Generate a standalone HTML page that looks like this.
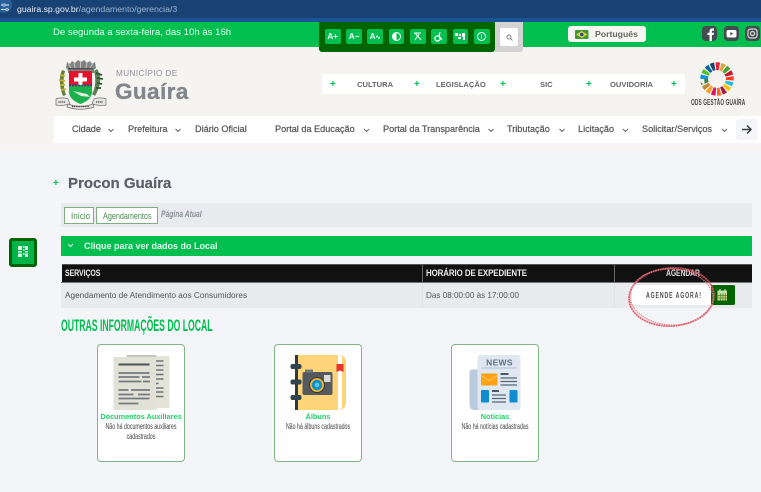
<!DOCTYPE html>
<html lang="pt"><head><meta charset="utf-8"><title>Procon Guaíra</title>
<style>
html,body{margin:0;padding:0}
body{width:761px;height:492px;position:relative;overflow:hidden;background:#f3f5f9;font-family:"Liberation Sans",sans-serif;color:#555}
.a{position:absolute}
.t{position:absolute;white-space:nowrap}
.sq{position:absolute;background:#00bf4f;border-radius:2px;width:15.5px;height:15px;top:29px;color:#fff;font:bold 8.2px/15px "Liberation Sans",sans-serif;text-align:center}
.nav{position:absolute;white-space:nowrap;top:123px;font-size:9.15px;line-height:12px;color:#555;-webkit-text-stroke:.2px #555}
.top{position:absolute;white-space:nowrap;top:79.5px;font-size:7.6px;line-height:10px;color:#666;font-weight:bold}
.plus{position:absolute;color:#00bf4f;font:bold 10px/10px "Liberation Sans",sans-serif;top:80px}
.card{position:absolute;top:343.5px;width:86px;height:116.5px;background:#fff;border:1.5px solid #80b584;border-radius:4px}
.ct{position:absolute;left:-10px;right:-10px;text-align:center;top:67px;color:#1fcf68;font-size:7.35px;line-height:10px;font-weight:bold;white-space:nowrap}
.cs{position:absolute;left:-20px;right:-20px;text-align:center;top:77px;color:#444;font-size:8px;line-height:10.2px;transform:scaleX(.66)}
svg{position:absolute;overflow:visible}
</style></head><body>

<!-- browser bar -->
<div class="a" style="left:0;top:0;width:761px;height:18px;background:#184274"></div>
<div class="a" style="left:0;top:18px;width:761px;height:4px;background:#1b5495"></div>
<div class="a" style="left:-4px;top:-3px;width:16px;height:16px;border-radius:50%;background:#2a5f9e"></div>
<svg style="left:1px;top:3px" width="9" height="9" viewBox="0 0 9 9"><path d="M0 2h8M0 6.5h8" stroke="#dfe8f3" stroke-width="1"/><circle cx="3" cy="2" r="1.2" fill="#2a5f9e" stroke="#dfe8f3" stroke-width=".7"/><circle cx="6" cy="6.5" r="1.2" fill="#2a5f9e" stroke="#dfe8f3" stroke-width=".7"/></svg>
<div class="t" style="left:17px;top:2.5px;font-size:8.7px;line-height:12px;color:#e6edf5">guaira.sp.gov.br<span style="color:#9db5d1">/agendamento/gerencia/3</span></div>

<!-- green bar -->
<div class="a" style="left:0;top:22px;width:761px;height:24.5px;background:#00bf4f"></div>
<div class="t" style="left:53px;top:26px;font-size:9.6px;line-height:13px;color:#eafff2">De segunda a sexta-feira, das 10h às 16h</div>

<!-- beige header -->
<div class="a" style="left:0;top:46.5px;width:761px;height:103px;background:#f5f4f0"></div>

<!-- accessibility -->
<div class="a" style="left:319px;top:22px;width:176px;height:29.5px;background:#006400;border-radius:0 0 3px 3px"></div>
<div class="sq" style="left:325px">A+</div>
<div class="sq" style="left:346.3px">A−</div>
<div class="sq" style="left:367.3px">A<span style="font-size:6px">∿</span></div>
<div class="sq" style="left:388.7px"><svg style="left:3px;top:3px" width="9" height="9"><circle cx="4.5" cy="4.5" r="4" fill="#00bf4f" stroke="#fff"/><path d="M4.5.5a4 4 0 0 0 0 8z" fill="#fff"/></svg></div>
<div class="sq" style="left:410px"><svg style="left:3px;top:3px" width="9" height="9" fill="none" stroke="#fff"><path d="M1 1h7M2 1l6 7M6 2L2 8"/></svg></div>
<div class="sq" style="left:431.3px"><svg style="left:3px;top:2px" width="9" height="11" fill="none" stroke="#fff" stroke-width="1.3"><circle cx="3.5" cy="7.5" r="2.5"/><path d="M6 1L5 5l3 4"/></svg></div>
<div class="sq" style="left:452.7px"><svg style="left:2px;top:3px" width="11" height="9" fill="#fff"><path d="M0 1h3v3H0zM4 2h2v2H4zM7 1h3v7H8V5H7zM3 5h3v2H3z"/></svg></div>
<div class="sq" style="left:474px"><svg style="left:3px;top:3px" width="9" height="9" fill="none" stroke="#fff"><circle cx="4.5" cy="4.5" r="4"/><path d="M4.5 2.5v4"/></svg></div>
<div class="a" style="left:495px;top:22px;width:28px;height:30px;background:#d3d3d3;border-radius:0 0 3px 0"></div>
<div class="a" style="left:500px;top:28px;width:18px;height:18px;background:#fff;border-radius:2px"></div>
<svg style="left:506px;top:34px" width="7" height="7" fill="none" stroke="#888"><circle cx="3" cy="3" r="2"/><path d="M4.5 4.5L6.5 6.5"/></svg>

<!-- language -->
<div class="a" style="left:568px;top:26px;width:77.5px;height:16px;background:#f7f7f2;border-radius:3px"></div>
<svg style="left:575px;top:30px" width="13.500" height="9"><rect width="13.500" height="9" rx="1" fill="#3f9a35"/><path d="M6.750 1l5.500 3.500-5.500 3.500-5.500-3.500z" fill="#e6d13a"/><circle cx="6.750" cy="4.500" r="1.800" fill="#2a4b93"/></svg>
<div class="t" style="left:595px;top:28px;font-size:8.7px;line-height:12px;font-weight:bold;color:#666">Português</div>

<!-- social -->
<div class="a" style="left:702px;top:26px;width:15px;height:15px;background:#444b50;border-radius:4px"></div>
<svg style="left:702px;top:26px" width="15" height="15"><path d="M7.500 15V9H5.500V6.800h2V5.300C7.500 3.600 8.500 2.400 10.200 2.400h1.800v2.300h-1.200c-.6 0-.9.300-.9.900v1.200h2.100L11.700 9H9.900v6z" fill="#fff"/></svg>
<div class="a" style="left:724px;top:26px;width:15px;height:15px;background:#444b50;border-radius:4px"></div>
<svg style="left:724px;top:26px" width="15" height="15"><rect x="2.500" y="4" width="10" height="7.500" rx="2" fill="#fff"/><path d="M6.300 6l3 1.700-3 1.700z" fill="#444b50"/></svg>
<div class="a" style="left:745px;top:26px;width:15px;height:15px;background:#444b50;border-radius:4px"></div>
<svg style="left:745px;top:26px" width="15" height="15" fill="none" stroke="#d8d8d8" stroke-width="1.200"><rect x="3" y="3" width="9" height="9" rx="2.500"/><circle cx="7.500" cy="7.500" r="2"/></svg>

<!-- coat of arms -->
<svg style="left:55px;top:58px" width="52" height="52" viewBox="0 0 52 52">
<path d="M12 4l3 2 2-3 3 2 3-3 3 2 3-2 3 3 3-2 2 3 3-2 1 6-2 2v3H13v-3l-2-2z" fill="#7f8381"/>
<path d="M13 5l3 5M19 4l1 6M25.500 3v7M32 4l-1 6M38 5l-3 5" stroke="#c2c4c2" stroke-width="1"/>
<path d="M13 10h25v1.500H13z" fill="#4e5250"/>
<path d="M7 12c-3 7-3 16 1 26l3-1c-3-8-3-17-1-24z" fill="#64803a"/>
<path d="M5 17l5 1M4 22l6 1M5 27l5 0M6 32l5-1" stroke="#c9b33c" stroke-width="1.800"/>
<path d="M42 11c5 7 4 17-2 27l-3-2c4-7 4-15 2-23z" fill="#5a8053"/>
<path d="M41 15l6 2M42 20l6 1M42 25l5 1M41 30l5 0" stroke="#2f5535" stroke-width="1.800"/>
<path d="M14 13h23v16H14z" fill="#e8112d"/>
<path d="M23.500 15h4v4.500h4.500v4h-4.500V28h-4v-4.500H19v-4h4.500z" fill="#fff"/>
<path d="M14 27h23v7c0 6-6 10-11.500 12C20 44 14 40 14 34z" fill="#1cb14d"/>
<path d="M14 27.500h23" stroke="#1b3f86" stroke-width="1.500" stroke-dasharray="2 1"/>
<path d="M18 33l14 3 3 3-9-1z" fill="#dfeedd"/>
<path d="M1 41c3-1.500 9-1.500 12 0l2 5c-4 1-10 2-14 1z" fill="#e6e6e3" stroke="#6f6f6f" stroke-width=".7"/>
<path d="M51 41c-3-1.500-9-1.500-12 0l-2 5c4 1 10 2 14 1z" fill="#e6e6e3" stroke="#6f6f6f" stroke-width=".7"/>
<path d="M13 46c8 3 17 3 25 0l1 3c-8 3-19 3-27 0z" fill="#e6e6e3" stroke="#6f6f6f" stroke-width=".7"/>
<path d="M3.500 44h7M41 44h7M17 48.500h17" stroke="#444" stroke-width="1.300" stroke-dasharray="1.200 .6"/>
</svg>

<div class="t" style="left:116px;top:69px;font-size:8.2px;line-height:10px;color:#8d9297;letter-spacing:.4px">MUNICÍPIO DE</div>
<div class="t" style="left:115px;top:79px;font-size:22.5px;line-height:26px;font-weight:bold;color:#80868b;letter-spacing:.4px;-webkit-text-stroke:.3px #80868b">Guaíra</div>

<!-- top menu -->
<div class="a" style="left:322px;top:74px;width:363px;height:20px;background:#fff;border-radius:2px"></div>
<div class="plus" style="left:330px">+</div>
<div class="top" style="left:357px">CULTURA</div>
<div class="plus" style="left:414px">+</div>
<div class="top" style="left:436px">LEGISLAÇÃO</div>
<div class="plus" style="left:500px">+</div>
<div class="top" style="left:540px">SIC</div>
<div class="plus" style="left:586px">+</div>
<div class="top" style="left:610px">OUVIDORIA</div>
<div class="plus" style="left:671px">+</div>

<!-- SDG wheel -->
<svg style="left:700px;top:62px" width="34" height="34" viewBox="0 0 34 34" fill="none" stroke-width="7.800">
<g transform="rotate(-95 17 17)">
<circle cx="17" cy="17" r="12.800" pathLength="170" stroke-dasharray="7.500 162.500" stroke-dashoffset="0" stroke="#e5243b"/>
<circle cx="17" cy="17" r="12.800" pathLength="170" stroke-dasharray="7.500 162.500" stroke-dashoffset="-10" stroke="#dda63a"/>
<circle cx="17" cy="17" r="12.800" pathLength="170" stroke-dasharray="7.500 162.500" stroke-dashoffset="-20" stroke="#4c9f38"/>
<circle cx="17" cy="17" r="12.800" pathLength="170" stroke-dasharray="7.500 162.500" stroke-dashoffset="-30" stroke="#c5192d"/>
<circle cx="17" cy="17" r="12.800" pathLength="170" stroke-dasharray="7.500 162.500" stroke-dashoffset="-40" stroke="#ff3a21"/>
<circle cx="17" cy="17" r="12.800" pathLength="170" stroke-dasharray="7.500 162.500" stroke-dashoffset="-50" stroke="#26bde2"/>
<circle cx="17" cy="17" r="12.800" pathLength="170" stroke-dasharray="7.500 162.500" stroke-dashoffset="-60" stroke="#fcc30b"/>
<circle cx="17" cy="17" r="12.800" pathLength="170" stroke-dasharray="7.500 162.500" stroke-dashoffset="-70" stroke="#a21942"/>
<circle cx="17" cy="17" r="12.800" pathLength="170" stroke-dasharray="7.500 162.500" stroke-dashoffset="-80" stroke="#fd6925"/>
<circle cx="17" cy="17" r="12.800" pathLength="170" stroke-dasharray="7.500 162.500" stroke-dashoffset="-90" stroke="#dd1367"/>
<circle cx="17" cy="17" r="12.800" pathLength="170" stroke-dasharray="7.500 162.500" stroke-dashoffset="-100" stroke="#fd9d24"/>
<circle cx="17" cy="17" r="12.800" pathLength="170" stroke-dasharray="7.500 162.500" stroke-dashoffset="-110" stroke="#bf8b2e"/>
<circle cx="17" cy="17" r="12.800" pathLength="170" stroke-dasharray="7.500 162.500" stroke-dashoffset="-120" stroke="#3f7e44"/>
<circle cx="17" cy="17" r="12.800" pathLength="170" stroke-dasharray="7.500 162.500" stroke-dashoffset="-130" stroke="#0a97d9"/>
<circle cx="17" cy="17" r="12.800" pathLength="170" stroke-dasharray="7.500 162.500" stroke-dashoffset="-140" stroke="#56c02b"/>
<circle cx="17" cy="17" r="12.800" pathLength="170" stroke-dasharray="7.500 162.500" stroke-dashoffset="-150" stroke="#00689d"/>
<circle cx="17" cy="17" r="12.800" pathLength="170" stroke-dasharray="7.500 162.500" stroke-dashoffset="-160" stroke="#19486a"/>
</g></svg>
<div class="t" style="left:690.500px;top:98px;font-size:8px;line-height:9px;font-weight:bold;color:#444;transform:scaleX(.6);transform-origin:left;letter-spacing:.2px">ODS GESTÃO GUAÍRA</div>

<!-- nav -->
<div class="a" style="left:54px;top:116px;width:707px;height:27px;background:#fff"></div>
<div class="nav" style="left:72px">Cidade</div>
<div class="nav" style="left:128px">Prefeitura</div>
<div class="nav" style="left:195px">Diário Oficial</div>
<div class="nav" style="left:275px">Portal da Educação</div>
<div class="nav" style="left:383px">Portal da Transparência</div>
<div class="nav" style="left:507px">Tributação</div>
<div class="nav" style="left:578px">Licitação</div>
<div class="nav" style="left:642px">Solicitar/Serviços</div>
<svg style="left:0;top:0" width="761" height="492" fill="none" stroke="#666" stroke-width="1"><path d="M108.500 129l2.500 2.500 2.500-2.500M175.500 129l2.500 2.500 2.500-2.500M364 129l2.500 2.500 2.500-2.500M488.500 129l2.500 2.500 2.500-2.500M559.500 129l2.500 2.500 2.500-2.500M623 129l2.500 2.500 2.500-2.500M722 129l2.500 2.500 2.500-2.500"/></svg>
<div class="a" style="left:736px;top:119px;width:22px;height:21px;background:#f3f5f9;border-radius:3px"></div>
<svg style="left:741px;top:124px" width="12" height="11" fill="none" stroke="#3d3d3d" stroke-width="1.500"><path d="M1 5.500h9M6 1.500l4 4-4 4"/></svg>

<!-- title -->
<div class="t" style="left:53px;top:178.500px;font-size:10px;line-height:10px;font-weight:bold;color:#00bf4f">+</div>
<div class="t" style="left:68px;top:174px;font-size:15px;line-height:20px;font-weight:bold;color:#5c6066;-webkit-text-stroke:.2px #5c6066">Procon Guaíra</div>

<!-- breadcrumb -->
<div class="a" style="left:61px;top:203px;width:691px;height:24px;background:#e9eaee"></div>
<div class="a" style="left:64px;top:207px;width:30px;height:16.500px;box-sizing:border-box;background:#fff;border:1.300px solid #7fae83"></div>
<div class="t" style="left:70.500px;top:209px;font-size:9.400px;line-height:13px;color:#4c8a52;transform:scaleX(.85);transform-origin:left">Início</div>
<div class="a" style="left:96px;top:207px;width:62px;height:16.500px;box-sizing:border-box;background:#fff;border:1.300px solid #7fae83"></div>
<div class="t" style="left:102.500px;top:209px;font-size:9.400px;line-height:13px;color:#4c8a52;transform:scaleX(.77);transform-origin:left">Agendamentos</div>
<div class="t" style="left:160.500px;top:208px;font-size:9.400px;line-height:12px;font-style:italic;font-weight:bold;color:#8a8f94;transform:scaleX(.72);transform-origin:left">Página Atual</div>

<!-- side button -->
<div class="a" style="left:9px;top:238px;width:28px;height:28.500px;box-sizing:border-box;background:#00b44a;border:3px solid #006400;border-radius:3px"></div>
<svg style="left:18px;top:246px" width="11" height="11" fill="#d9f5e2"><path d="M0 0h4v4H0zM5 0h1.500v2H5zM7 0h3v4H7zM5 3h1.500v2H5zM0 5h4v1.500H0zM7 5h3v1.500H7zM0 7.500h4V11H0zM5 7h1.500v2H5zM7 7.500h3V11H7z"/></svg>

<!-- green accordion -->
<div class="a" style="left:61px;top:236px;width:691px;height:19.500px;background:#00bf4f"></div>
<svg style="left:67px;top:243px" width="7" height="5" fill="none" stroke="#e8fff0" stroke-width="1"><path d="M1 1l2.500 2.500L6 1"/></svg>
<div class="t" style="left:84px;top:240px;font-size:9px;line-height:12px;font-weight:bold;color:#eafff2">Clique para ver dados do Local</div>

<!-- table -->
<div class="a" style="left:62px;top:264px;width:690px;height:18.500px;background:#111"></div>
<div class="a" style="left:61.500px;top:264px;width:690.500px;height:1px;background:#555"></div>
<div class="a" style="left:61px;top:282px;width:691px;height:1.200px;background:#777"></div>
<div class="a" style="left:422px;top:264px;width:1px;height:19px;background:#666"></div>
<div class="a" style="left:613.500px;top:264px;width:1px;height:19px;background:#666"></div>
<div class="t" style="left:65px;top:267px;font-size:9.200px;line-height:12px;font-weight:bold;color:#eee;transform:scaleX(.76);transform-origin:left;letter-spacing:-.1px">SERVIÇOS</div>
<div class="t" style="left:425.500px;top:267px;font-size:9.200px;line-height:12px;font-weight:bold;color:#eee;transform:scaleX(.86);transform-origin:left;letter-spacing:-.1px">HORÁRIO DE EXPEDIENTE</div>
<div class="t" style="left:666px;top:267px;font-size:9.200px;line-height:12px;font-weight:bold;color:#ddd;transform:scaleX(.74);transform-origin:left;letter-spacing:-.1px">AGENDAR</div>
<div class="a" style="left:61px;top:283.200px;width:691px;height:24.800px;background:#e9eaee"></div>
<div class="a" style="left:422px;top:283.500px;width:1px;height:24.500px;background:#e2e3e7"></div>
<div class="a" style="left:613.500px;top:283.500px;width:1px;height:24.500px;background:#e2e3e7"></div>
<div class="t" style="left:65px;top:290px;font-size:8.250px;line-height:12px;color:#555">Agendamento de Atendimento aos Consumidores</div>
<div class="t" style="left:426px;top:290px;font-size:8.150px;line-height:12px;color:#555">Das 08:00:00 às 17:00:00</div>

<div class="a" style="left:632px;top:285px;width:79px;height:20px;background:#fff;border-radius:3px 0 0 3px"></div>
<div class="t" style="left:645.500px;top:289px;font-size:8.600px;line-height:12px;font-weight:bold;color:#4a4a4a;letter-spacing:1.500px;transform:scaleX(.6);transform-origin:left">AGENDE AGORA!</div>
<div class="a" style="left:711px;top:285px;width:24px;height:20px;background:#006400;border-radius:0 2px 2px 0"></div>
<svg style="left:717px;top:289px" width="11" height="12"><rect x=".5" y="1.500" width="9.500" height="10" fill="#d6cf75"/><rect x=".5" y="1.500" width="9.500" height="3" fill="#b9e0a6"/><path d="M1 6.500h9M1 9h9M3.500 4.500v7M6 4.500v7M8.500 4.500v7" stroke="#3f8a3a" stroke-width=".7"/><path d="M3 0v3M8 0v3" stroke="#d9efd0"/></svg>

<!-- red hand-drawn circle -->
<svg style="left:0;top:0" width="761" height="492" fill="none">
<ellipse cx="671.500" cy="297" rx="42.500" ry="29" transform="rotate(-4 671.500 297)" stroke="#dc5560" stroke-width="1.800" stroke-dasharray="2 .5" opacity=".9"/>
<ellipse cx="671.500" cy="297" rx="41.500" ry="28" transform="rotate(3 671.500 297)" stroke="#e57b85" stroke-width="1.300" stroke-dasharray="1.500 .8" opacity=".85"/>
</svg>

<!-- heading -->
<div class="t" style="left:61px;top:317px;font-size:16.500px;line-height:18px;font-weight:bold;color:#00bf4f;transform:scaleX(.525);transform-origin:left">OUTRAS INFORMAÇÕES DO LOCAL</div>

<!-- cards -->
<div class="card" style="left:97px">
<svg style="left:15px;top:10px" width="56" height="56" viewBox="0 0 56 56">
<rect x="13.500" y="0" width="30" height="52" fill="#c4c5bb"/><rect x="43" y="1" width="13.500" height="52" fill="#e3e3d8"/>
<rect x=".5" y="2" width="43" height="53" fill="#e2e1d5"/>
<path d="M5.500 9.500h31" stroke="#4b5259" stroke-width="2"/>
<path d="M5.500 18h31M5.500 22h21M29 22h8M5.500 26.500h23M30 26.500h7M5.500 35h10M18 35h19M5.500 39.500h15M25 39.500h12M5.500 43.500h31M5.500 48.500h20" stroke="#747b80" stroke-width="1.700"/>
<path d="M43 6h7.500M43 10.500h7.500M43 15h7.500M43 19.500h7.500M43 24h7.500M43 28.500h2.500M43 33h7.500M43 37h7.500M43 41.500h7.500" stroke="#6e757a" stroke-width="1.500"/>
</svg>
<div class="ct">Documentos Auxiliares</div>
<div class="cs">Não há documentos auxiliares<br>cadastrados</div>
</div>

<div class="card" style="left:274px">
<svg style="left:15px;top:10px" width="58" height="56" viewBox="0 0 58 56">
<path d="M8 0h41a7 7 0 0 1 7 7v41a7 7 0 0 1-7 7H8z" fill="#fed478"/>
<path d="M48 0h1a3.500 3.500 0 0 1 3 4v47a3.500 3.500 0 0 1-3 4h-1z" fill="#fff"/>
<rect x="5" y="0" width="3" height="55" fill="#2c3a40"/>
<rect x=".5" y="9" width="11" height="5" rx="2" fill="#33454c"/><rect x=".5" y="24.500" width="11" height="5" rx="2" fill="#33454c"/><rect x=".5" y="40" width="11" height="5" rx="2" fill="#33454c"/>
<path d="M46.500 9h7v8l-3.500-1.500-3.500 1.500z" fill="#e8362e"/>
<rect x="12.500" y="17" width="30" height="23" rx="2" fill="#555a5e"/>
<rect x="15" y="14.500" width="8" height="3" fill="#777"/>
<rect x="34" y="20" width="6.500" height="7" fill="#dcdcdc"/>
<circle cx="27" cy="30" r="7.500" fill="#f4b330" stroke="#333" stroke-width="1"/><circle cx="27" cy="30" r="5.200" fill="#0d8fc4"/><circle cx="27" cy="30" r="2.300" fill="#5ac5ea"/>
</svg>
<div class="ct">Álbuns</div>
<div class="cs">Não há álbuns cadastrados</div>
</div>

<div class="card" style="left:451px">
<svg style="left:17px;top:10px" width="53" height="56" viewBox="0 0 53 56">
<path d="M3 14.500h7V55H5a4.500 4.500 0 0 1-4.500-4.500V17a2.500 2.500 0 0 1 2.500-2.500z" fill="#b9cbdd"/>
<rect x="8.500" y="0" width="43" height="55" rx="3" fill="#dfe7f0"/>
<text x="30.500" y="10.500" text-anchor="middle" font-family="Liberation Sans" font-size="8.500" font-weight="bold" fill="#5d6f85" letter-spacing=".3">NEWS</text>
<path d="M12.500 13h35" stroke="#c7d3e0" stroke-width="2"/>
<rect x="12" y="18.500" width="16.500" height="12" rx="1" fill="#fea112"/><path d="M12 20.500l8.200 5 8.300-5" stroke="#fdc66e" fill="none"/>
<path d="M31.500 19h8" stroke="#32404f" stroke-width="1.700"/><path d="M31.500 23h16.500M31.500 26.500h16.500M31.500 30h16.500" stroke="#566677" stroke-width="1.300"/>
<rect x="12" y="35" width="8" height="12.500" rx="1" fill="#0f8cd0"/><rect x="40.500" y="35" width="8" height="12.500" rx="1" fill="#0f8cd0"/>
<path d="M23 36h7" stroke="#32404f" stroke-width="1.700"/><path d="M23 40h14M23 43.500h14M23 47h14" stroke="#566677" stroke-width="1.300"/>
</svg>
<div class="ct">Notícias</div>
<div class="cs">Não há notícias cadastradas</div>
</div>

</body></html>
